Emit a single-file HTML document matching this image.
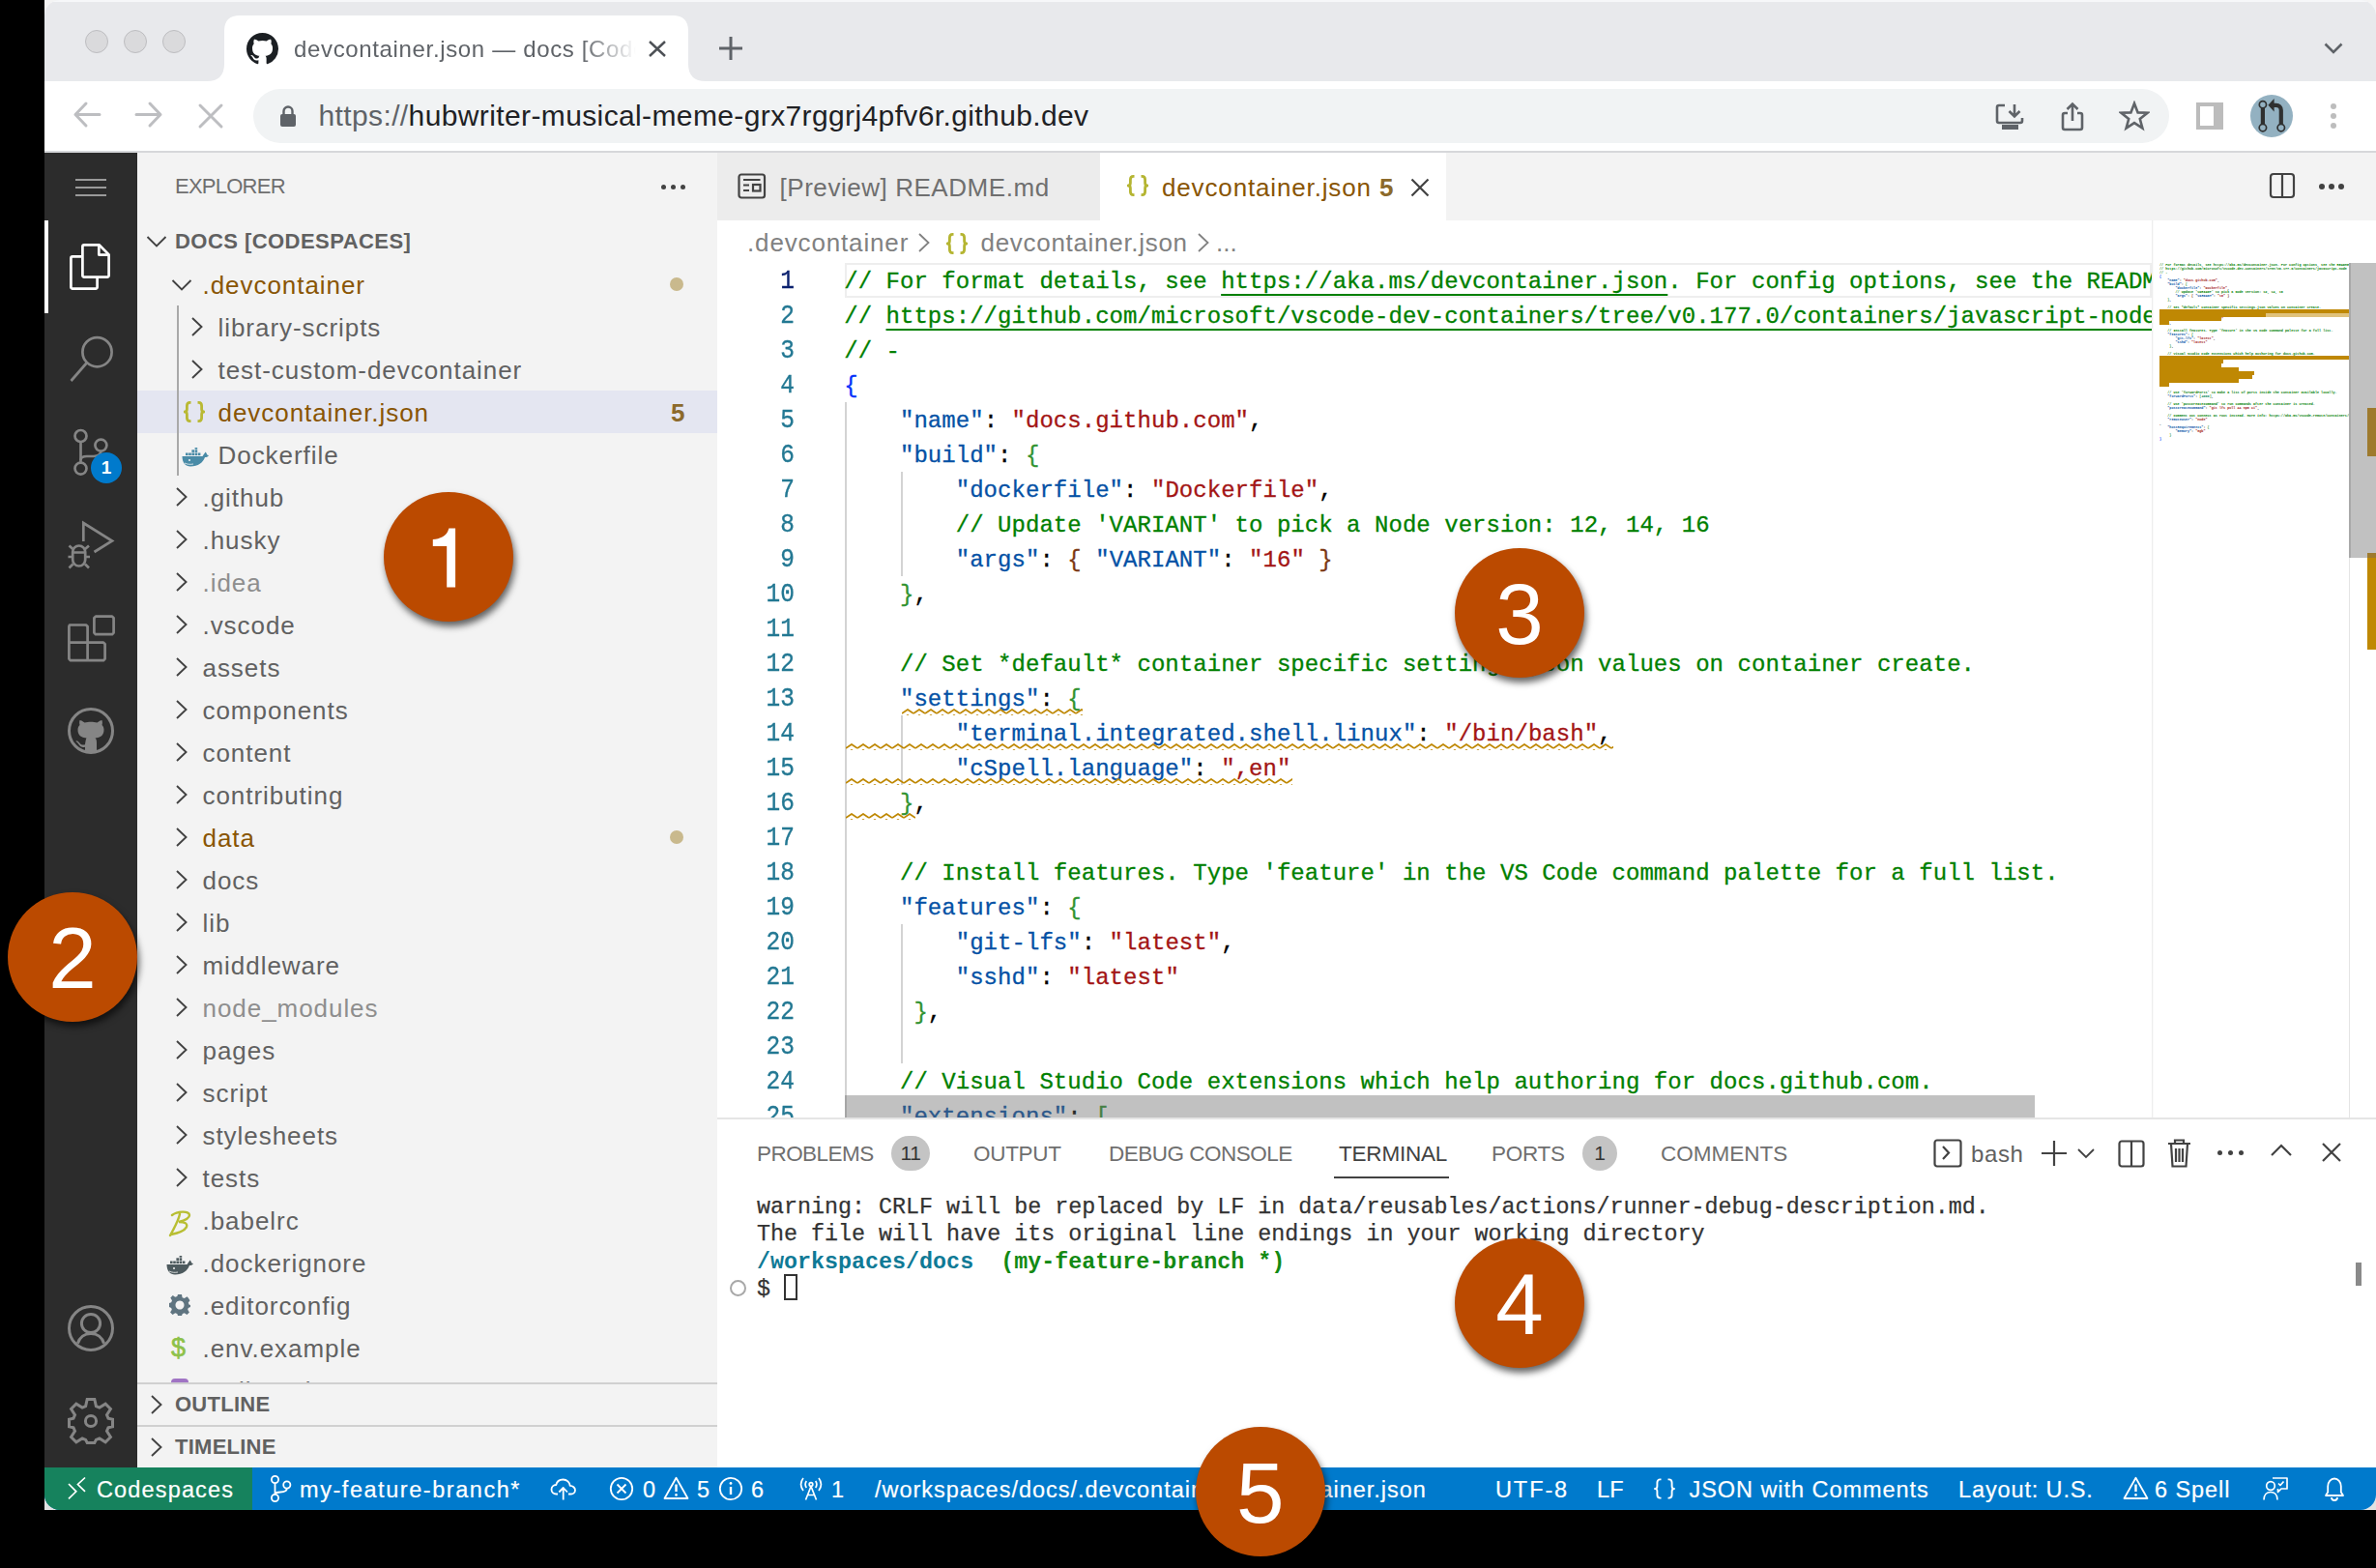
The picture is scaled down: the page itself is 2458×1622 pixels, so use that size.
<!DOCTYPE html>
<html><head><meta charset="utf-8">
<style>
*{box-sizing:border-box}
html,body{margin:0;padding:0}
body{width:2458px;height:1622px;background:#000;overflow:hidden;position:relative;font-family:"Liberation Sans",sans-serif}
.a{position:absolute}
#win{position:absolute;left:0;top:0;width:2458px;height:1562px;clip-path:inset(0 0 0 46px round 16px);background:#fff;overflow:hidden}
#frame{position:absolute;left:46px;top:0;width:2412px;height:1562px;background:linear-gradient(180deg,#f4f4f4 0,#f4f4f4 60px,#e2e2e2 1500px)}
.mono{font-family:"Liberation Mono",monospace}
.t{white-space:pre;position:absolute}
</style></head>
<body>
<div id="frame"></div>
<div id="win">

  <!-- chrome tab strip -->
  <div class="a" style="left:46px;top:0;width:2412px;height:84px;background:#e8e9ec"></div>
  <div class="a" style="left:46px;top:0;width:2412px;height:2px;background:#f6f7f9"></div>
  <!-- traffic lights -->
  <div class="a" style="left:88px;top:31px;width:24px;height:24px;border-radius:50%;background:#dadadc;border:1px solid #bdbdc0"></div>
  <div class="a" style="left:128px;top:31px;width:24px;height:24px;border-radius:50%;background:#dadadc;border:1px solid #bdbdc0"></div>
  <div class="a" style="left:168px;top:31px;width:24px;height:24px;border-radius:50%;background:#dadadc;border:1px solid #bdbdc0"></div>
  <!-- active tab -->
  <svg class="a" style="left:214px;top:16px" width="516" height="68" viewBox="0 0 516 68">
    <path d="M0 68 Q18 68 18 50 L18 16 Q18 0 34 0 L482 0 Q498 0 498 16 L498 50 Q498 68 516 68 Z" fill="#fff"/>
  </svg>
  <svg class="a" style="left:255px;top:34px" width="33" height="33" viewBox="0 0 16 16"><path fill="#1b1f23" d="M8 0C3.58 0 0 3.58 0 8c0 3.54 2.29 6.53 5.47 7.59.4.07.55-.17.55-.38 0-.19-.01-.82-.01-1.49-2.01.37-2.53-.49-2.69-.94-.09-.23-.48-.94-.82-1.13-.28-.15-.68-.52-.01-.53.63-.01 1.08.58 1.23.82.72 1.21 1.87.87 2.33.66.07-.52.28-.87.51-1.07-1.78-.2-3.64-.89-3.64-3.95 0-.87.31-1.59.82-2.15-.08-.2-.36-1.02.08-2.12 0 0 .67-.21 2.2.82.64-.18 1.32-.27 2-.27.68 0 1.36.09 2 .27 1.53-1.04 2.2-.82 2.2-.82.44 1.1.16 1.92.08 2.12.51.56.82 1.27.82 2.15 0 3.07-1.87 3.75-3.65 3.95.29.25.54.73.54 1.48 0 1.07-.01 1.93-.01 2.2 0 .21.15.46.55.38A8.013 8.013 0 0016 8c0-4.42-3.58-8-8-8z"/></svg>
  <div class="t" style="left:304px;top:35.5px;font-size:24px;line-height:30px;color:#5f6368;letter-spacing:0.65px;width:354px;overflow:hidden;-webkit-mask-image:linear-gradient(90deg,#000 84%,transparent 100%)">devcontainer.json — docs [Codespaces]</div>
  <svg class="a" style="left:670px;top:42px" width="20" height="17" viewBox="0 0 20 17"><path d="M2 1 L18 16 M18 1 L2 16" stroke="#4d5156" stroke-width="2.4" fill="none"/></svg>
  <svg class="a" style="left:742px;top:37px" width="28" height="26" viewBox="0 0 28 26"><path d="M14 1 V25 M2 13 H26" stroke="#5f6368" stroke-width="3" fill="none"/></svg>
  <svg class="a" style="left:2404px;top:44px" width="20" height="12" viewBox="0 0 20 12"><path d="M1.5 1.5 L10 10 L18.5 1.5" stroke="#5f6368" stroke-width="2.6" fill="none"/></svg>

  <!-- toolbar -->
  <div class="a" style="left:46px;top:84px;width:2412px;height:72px;background:#fff"></div>
  <div class="a" style="left:46px;top:156px;width:2412px;height:2px;background:#d6d7da"></div>
  <svg class="a" style="left:74px;top:104px" width="32" height="30" viewBox="0 0 32 30"><path d="M15 3 L4 14.5 L15 26 M4 14.5 H29" stroke="#bdbec1" stroke-width="3" fill="none" stroke-linecap="round" stroke-linejoin="round"/></svg>
  <svg class="a" style="left:138px;top:104px" width="32" height="30" viewBox="0 0 32 30"><path d="M17 3 L28 14.5 L17 26 M28 14.5 H3" stroke="#bdbec1" stroke-width="3" fill="none" stroke-linecap="round" stroke-linejoin="round"/></svg>
  <svg class="a" style="left:203px;top:105px" width="30" height="30" viewBox="0 0 30 30"><path d="M4 4 L26 26 M26 4 L4 26" stroke="#bdbec1" stroke-width="3" fill="none" stroke-linecap="round"/></svg>
  <div class="a" style="left:262px;top:92px;width:1982px;height:56px;border-radius:28px;background:#f1f3f4"></div>
  <svg class="a" style="left:289px;top:108px" width="18" height="24" viewBox="0 0 18 24"><path d="M4.5 10 V7 a4.5 4.5 0 0 1 9 0 V10" stroke="#5f6368" stroke-width="2.4" fill="none"/><rect x="1" y="10" width="16" height="13" rx="2" fill="#5f6368"/></svg>
  <div class="t" style="left:329.5px;top:101.5px;font-size:30px;line-height:36px;color:#202124;letter-spacing:0.38px"><span style="color:#5f6368">https://</span>hubwriter-musical-meme-grx7rggrj4pfv6r.github.dev</div>
  <!-- install -->
  <svg class="a" style="left:2064px;top:106px" width="32" height="30" viewBox="0 0 32 30"><path d="M10 3 H4 a2 2 0 0 0 -2 2 V19 a2 2 0 0 0 2 2 H26 a2 2 0 0 0 2 -2 V16" stroke="#5f6368" stroke-width="2.6" fill="none"/><path d="M20 2 V14 M14.5 9 L20 14.5 L25.5 9" stroke="#5f6368" stroke-width="2.6" fill="none"/><rect x="7" y="23" width="17" height="5" fill="#5f6368"/></svg>
  <!-- share -->
  <svg class="a" style="left:2131px;top:105px" width="26" height="32" viewBox="0 0 26 32"><path d="M8 12 H5 a2 2 0 0 0 -2 2 V27 a2 2 0 0 0 2 2 H21 a2 2 0 0 0 2 -2 V14 a2 2 0 0 0 -2 -2 H18" stroke="#5f6368" stroke-width="2.6" fill="none"/><path d="M13 20 V3 M7.5 8 L13 2.5 L18.5 8" stroke="#5f6368" stroke-width="2.6" fill="none"/></svg>
  <!-- star -->
  <svg class="a" style="left:2192px;top:104px" width="32" height="32" viewBox="0 0 32 32"><path d="M16 3 L19.6 12.4 L29.5 12.8 L21.8 19 L24.4 28.6 L16 23.1 L7.6 28.6 L10.2 19 L2.5 12.8 L12.4 12.4 Z" stroke="#5f6368" stroke-width="2.6" fill="none" stroke-linejoin="miter"/></svg>
  <!-- side panel -->
  <div class="a" style="left:2272px;top:106px;width:28px;height:28px;background:#bcbcbc"></div>
  <div class="a" style="left:2276px;top:110px;width:14px;height:20px;background:#fff"></div>
  <!-- avatar -->
  <div class="a" style="left:2328px;top:98px;width:44px;height:44px;border-radius:50%;background:#93b1c1"></div>
  <svg class="a" style="left:2320px;top:90px" width="60" height="60" viewBox="0 0 60 60"><g fill="none" stroke="#2f3030"><circle cx="20.9" cy="18.2" r="3.6" stroke-width="1.7"/><circle cx="20.9" cy="42.1" r="3.7" stroke-width="1.7"/><circle cx="39.8" cy="42.1" r="3.7" stroke-width="1.7"/><path d="M20.9 22 V38.3" stroke-width="4.2"/><path d="M39.8 38.3 V24 C39.8 21 37.6 18.8 34.6 18.8 H31" stroke-width="4.2"/></g><path d="M26.4 18.8 L32.6 11.9 V25.6 Z" fill="#2f3030"/></svg>
  <!-- kebab -->
  <div class="a" style="left:2411px;top:107px;width:6px;height:6px;border-radius:50%;background:#bdbdbd"></div>
  <div class="a" style="left:2411px;top:117px;width:6px;height:6px;border-radius:50%;background:#bdbdbd"></div>
  <div class="a" style="left:2411px;top:127px;width:6px;height:6px;border-radius:50%;background:#bdbdbd"></div>



  <!-- activity bar -->
  <div class="a" style="left:46px;top:158px;width:96px;height:1360px;background:#2c2c2c"></div>
  <div class="a" style="left:78px;top:185px;width:32px;height:2px;background:#9a9a9a"></div>
  <div class="a" style="left:78px;top:193px;width:32px;height:2px;background:#9a9a9a"></div>
  <div class="a" style="left:78px;top:201px;width:32px;height:2px;background:#9a9a9a"></div>
  <div class="a" style="left:46px;top:228px;width:4px;height:96px;background:#fff"></div>
  <svg class="a" style="left:70px;top:252px" width="48" height="48" viewBox="0 0 48 48" fill="none" stroke="#fff" stroke-width="2.7" stroke-linejoin="round">
    <path d="M14.3 13.3 H5 a1.6 1.6 0 0 0 -1.6 1.6 V45 a1.6 1.6 0 0 0 1.6 1.6 H29 a1.6 1.6 0 0 0 1.6 -1.6 V36"/>
    <path d="M17 1.3 H32.5 L42.6 11.4 V33 a1.6 1.6 0 0 1 -1.6 1.6 H17 a1.6 1.6 0 0 1 -1.6 -1.6 V3 a1.6 1.6 0 0 1 1.6 -1.6 Z"/>
    <path d="M32.3 1.5 V11.6 H42.4" />
  </svg>
  <svg class="a" style="left:70px;top:347px" width="48" height="50" viewBox="0 0 48 50" fill="none" stroke="#858585" stroke-width="2.7">
    <circle cx="30.5" cy="17.2" r="15.1"/>
    <path d="M19.6 28.5 L3.5 47"/>
  </svg>
  <svg class="a" style="left:70px;top:440px" width="48" height="56" viewBox="0 0 48 56" fill="none" stroke="#858585" stroke-width="2.7">
    <circle cx="13.5" cy="11" r="6"/>
    <circle cx="34.4" cy="20.6" r="6"/>
    <circle cx="13.5" cy="44.6" r="6"/>
    <path d="M13.5 17 V38.6"/>
    <path d="M34.4 26.6 C34.4 31 31 32 27 32 H20 C16 32 13.5 33 13.5 36"/>
  </svg>
  <div class="a" style="left:94px;top:468px;width:32px;height:32px;border-radius:50%;background:#007acc;color:#fff;font-weight:bold;font-size:19px;line-height:32px;text-align:center">1</div>
  <svg class="a" style="left:70px;top:538px" width="50" height="52" viewBox="0 0 50 52" fill="none" stroke="#858585" stroke-width="2.7">
    <path d="M16.3 22 V3 L46 21.5 L27.5 33"/>
    <path d="M11.7 26.5 a6.5 6.5 0 0 1 6.5 6.5 V41 a6.5 6.5 0 0 1 -13 0 V33 a6.5 6.5 0 0 1 6.5 -6.5 Z"/>
    <path d="M5.2 33.5 H18.2 M1.5 26.5 L5.5 30 M22 26.5 L18 30 M0.5 38 H5 M18.4 38 H23 M1.5 49.5 L5.5 45.5 M22 49.5 L18 45.5"/>
  </svg>
  <svg class="a" style="left:70px;top:635px" width="50" height="50" viewBox="0 0 50 50" fill="none" stroke="#858585" stroke-width="2.7" stroke-linejoin="round">
    <path d="M2 11.5 H19 L20.6 13 V29.6 H37 L38.6 31.2 V46.6 L37 48.2 H3 L1.4 46.6 V13 Z"/>
    <path d="M1.4 29.6 H20.6 V48.2"/>
    <path d="M29 2.6 H46 L47.6 4.2 V19.6 L46 21.2 H29 L27.4 19.6 V4.2 Z"/>
  </svg>
  <svg class="a" style="left:70px;top:732px" width="48" height="48" viewBox="0 0 48 48">
    <circle cx="24" cy="24" r="22.5" fill="none" stroke="#858585" stroke-width="3"/>
    <path fill="#858585" d="M12.5 13 C13 13 15.5 13.8 17.5 15.5 C19.5 14.9 22 14.7 24 14.7 C26 14.7 28.5 14.9 30.5 15.5 C32.5 13.8 35 13 35.5 13 C36 14.5 36 16.5 35.5 18 C36.8 19.3 37.5 21 37.5 23 C37.5 28.5 34 31 28.5 31.6 C29.6 32.6 30 34 30 36 V45.5 C28 46.2 26 46.5 24 46.5 C22 46.5 20 46.2 18 45.5 V40.8 C15 41.5 13 40.5 11.5 38 C10.5 36.4 9.5 35.6 8.5 35 L9 34.2 C10.5 34.5 11.8 35.6 13 37.2 C14.2 38.7 15.8 38.9 18 38.3 C18.2 36.9 18.8 32.4 19.5 31.6 C14 31 10.5 28.5 10.5 23 C10.5 21 11.2 19.3 12.5 18 C12 16.5 12 14.5 12.5 13 Z"/>
  </svg>
  <svg class="a" style="left:70px;top:1350px" width="48" height="48" viewBox="0 0 48 48" fill="none" stroke="#858585" stroke-width="3">
    <circle cx="24" cy="24" r="22.5"/>
    <circle cx="24" cy="19" r="9.6"/>
    <path d="M10.4 39.7 C12.3 33.5 17.6 29.4 24 29.4 C30.4 29.4 35.7 33.5 37.6 39.7"/>
  </svg>
  <svg class="a" style="left:70px;top:1446px" width="48" height="48" viewBox="0 0 48 48" fill="none" stroke="#858585" stroke-width="3" stroke-linejoin="miter">
    <path d="M20.2 1.5 H27.8 L29.4 8.6 L32.9 10.1 L39.1 6.2 L44.4 11.5 L40.5 17.7 L42 21.2 L46.5 22.2 V29.8 L42 30.8 L40.5 34.3 L44.4 40.5 L39.1 45.8 L32.9 41.9 L29.4 43.4 L27.8 46.5 H20.2 L18.6 43.4 L15.1 41.9 L8.9 45.8 L3.6 40.5 L7.5 34.3 L6 30.8 L1.5 29.8 V22.2 L6 21.2 L7.5 17.7 L3.6 11.5 L8.9 6.2 L15.1 10.1 L18.6 8.6 Z"/>
    <circle cx="24" cy="24" r="5.6"/>
  </svg>

  <!-- sidebar -->
  <div class="a" style="left:142px;top:158px;width:600px;height:1360px;background:#f3f3f3;overflow:hidden">
<div class="a" style="left:-142px;top:-158px;width:2458px;height:1622px">
<div class="t" style="left:181px;top:178px;font-size:22px;line-height:30px;color:#6f6f6f;letter-spacing:-0.75px">EXPLORER</div>
<div class="a" style="left:684px;top:191px;width:5px;height:5px;border-radius:50%;background:#424242"></div><div class="a" style="left:694px;top:191px;width:5px;height:5px;border-radius:50%;background:#424242"></div><div class="a" style="left:704px;top:191px;width:5px;height:5px;border-radius:50%;background:#424242"></div>
<svg class="a" style="left:151px;top:243px" width="22" height="14" viewBox="0 0 22 14"><path d="M1.5 2 L11 11.5 L20.5 2" stroke="#424242" stroke-width="1.9" fill="none"/></svg>
<div class="t" style="left:181px;top:235px;font-size:22px;line-height:30px;color:#616161;font-weight:bold;letter-spacing:0.45px">DOCS [CODESPACES]</div>
<svg class="a" style="left:177px;top:288px" width="22" height="14" viewBox="0 0 22 14"><path d="M1.5 2 L11 11.5 L20.5 2" stroke="#424242" stroke-width="1.9" fill="none"/></svg>
<div class="t" style="left:209.5px;top:273px;font-size:26px;line-height:44px;color:#895503;letter-spacing:0.95px">.devcontainer</div>
<div class="a" style="left:693px;top:287px;width:14px;height:14px;border-radius:50%;background:#c9b98d"></div>
<svg class="a" style="left:197px;top:327px" width="14" height="22" viewBox="0 0 14 22"><path d="M2 2 L11.5 11 L2 20" stroke="#424242" stroke-width="1.9" fill="none"/></svg>
<div class="t" style="left:225.5px;top:317px;font-size:26px;line-height:44px;color:#616161;letter-spacing:0.95px">library-scripts</div>
<svg class="a" style="left:197px;top:371px" width="14" height="22" viewBox="0 0 14 22"><path d="M2 2 L11.5 11 L2 20" stroke="#424242" stroke-width="1.9" fill="none"/></svg>
<div class="t" style="left:225.5px;top:361px;font-size:26px;line-height:44px;color:#616161;letter-spacing:0.95px">test-custom-devcontainer</div>
<div class="a" style="left:142px;top:404px;width:600px;height:44px;background:#e4e6f1"></div>
<svg class="a" style="left:190px;top:415px" width="22" height="22" viewBox="0 0 22 22" fill="none" stroke="#b9b934" stroke-width="2.8" stroke-linejoin="round"><path d="M7.5 1.4 H6.5 C4.4 1.4 3.4 2.6 3.4 4.8 V8.2 C3.4 9.9 2.6 11 1 11 C2.6 11 3.4 12.1 3.4 13.8 V17.2 C3.4 19.4 4.4 20.6 6.5 20.6 H7.5"/><path d="M14.5 1.4 H15.5 C17.6 1.4 18.6 2.6 18.6 4.8 V8.2 C18.6 9.9 19.4 11 21 11 C19.4 11 18.6 12.1 18.6 13.8 V17.2 C18.6 19.4 17.6 20.6 15.5 20.6 H14.5"/></svg>
<div class="t" style="left:225.5px;top:405px;font-size:26px;line-height:44px;color:#895503;letter-spacing:0.95px">devcontainer.json</div>
<div class="t" style="left:694px;top:405px;font-size:26px;line-height:44px;color:#8c6a2b;font-weight:bold">5</div>
<svg class="a" style="left:188px;top:463px" width="28" height="20" viewBox="0 0 28 20"><g fill="#498ba7"><rect x="4" y="5.5" width="2.6" height="2.6"/><rect x="7.2" y="5.5" width="2.6" height="2.6"/><rect x="10.4" y="5.5" width="2.6" height="2.6"/><rect x="13.6" y="5.5" width="2.6" height="2.6"/><rect x="16.8" y="5.5" width="2.6" height="2.6"/><rect x="10.4" y="2.3" width="2.6" height="2.6"/><rect x="13.6" y="2.3" width="2.6" height="2.6"/><rect x="13.6" y="-0.9" width="2.6" height="2.6"/><path d="M0.5 9 H21.5 C22.5 7 24 6 24.5 4.5 C25.5 5.5 26 6.5 26 7.2 L28 8.2 C27 9.5 25.5 10 24 10 C22 15.5 17 19.5 9 19.5 C4 19.5 0.5 15.5 0.5 9 Z"/></g><circle cx="8" cy="13" r="1" fill="#f3f3f3"/><path d="M3 16 C6 17.5 9 17.6 12 17" stroke="#f3f3f3" stroke-width="0.8" fill="none"/></svg>
<div class="t" style="left:225.5px;top:449px;font-size:26px;line-height:44px;color:#616161;letter-spacing:0.95px">Dockerfile</div>
<svg class="a" style="left:181px;top:503px" width="14" height="22" viewBox="0 0 14 22"><path d="M2 2 L11.5 11 L2 20" stroke="#424242" stroke-width="1.9" fill="none"/></svg>
<div class="t" style="left:209.5px;top:493px;font-size:26px;line-height:44px;color:#616161;letter-spacing:0.95px">.github</div>
<svg class="a" style="left:181px;top:547px" width="14" height="22" viewBox="0 0 14 22"><path d="M2 2 L11.5 11 L2 20" stroke="#424242" stroke-width="1.9" fill="none"/></svg>
<div class="t" style="left:209.5px;top:537px;font-size:26px;line-height:44px;color:#616161;letter-spacing:0.95px">.husky</div>
<svg class="a" style="left:181px;top:591px" width="14" height="22" viewBox="0 0 14 22"><path d="M2 2 L11.5 11 L2 20" stroke="#424242" stroke-width="1.9" fill="none"/></svg>
<div class="t" style="left:209.5px;top:581px;font-size:26px;line-height:44px;color:#8e8e8e;letter-spacing:0.95px">.idea</div>
<svg class="a" style="left:181px;top:635px" width="14" height="22" viewBox="0 0 14 22"><path d="M2 2 L11.5 11 L2 20" stroke="#424242" stroke-width="1.9" fill="none"/></svg>
<div class="t" style="left:209.5px;top:625px;font-size:26px;line-height:44px;color:#616161;letter-spacing:0.95px">.vscode</div>
<svg class="a" style="left:181px;top:679px" width="14" height="22" viewBox="0 0 14 22"><path d="M2 2 L11.5 11 L2 20" stroke="#424242" stroke-width="1.9" fill="none"/></svg>
<div class="t" style="left:209.5px;top:669px;font-size:26px;line-height:44px;color:#616161;letter-spacing:0.95px">assets</div>
<svg class="a" style="left:181px;top:723px" width="14" height="22" viewBox="0 0 14 22"><path d="M2 2 L11.5 11 L2 20" stroke="#424242" stroke-width="1.9" fill="none"/></svg>
<div class="t" style="left:209.5px;top:713px;font-size:26px;line-height:44px;color:#616161;letter-spacing:0.95px">components</div>
<svg class="a" style="left:181px;top:767px" width="14" height="22" viewBox="0 0 14 22"><path d="M2 2 L11.5 11 L2 20" stroke="#424242" stroke-width="1.9" fill="none"/></svg>
<div class="t" style="left:209.5px;top:757px;font-size:26px;line-height:44px;color:#616161;letter-spacing:0.95px">content</div>
<svg class="a" style="left:181px;top:811px" width="14" height="22" viewBox="0 0 14 22"><path d="M2 2 L11.5 11 L2 20" stroke="#424242" stroke-width="1.9" fill="none"/></svg>
<div class="t" style="left:209.5px;top:801px;font-size:26px;line-height:44px;color:#616161;letter-spacing:0.95px">contributing</div>
<svg class="a" style="left:181px;top:855px" width="14" height="22" viewBox="0 0 14 22"><path d="M2 2 L11.5 11 L2 20" stroke="#424242" stroke-width="1.9" fill="none"/></svg>
<div class="t" style="left:209.5px;top:845px;font-size:26px;line-height:44px;color:#895503;letter-spacing:0.95px">data</div>
<div class="a" style="left:693px;top:859px;width:14px;height:14px;border-radius:50%;background:#c9b98d"></div>
<svg class="a" style="left:181px;top:899px" width="14" height="22" viewBox="0 0 14 22"><path d="M2 2 L11.5 11 L2 20" stroke="#424242" stroke-width="1.9" fill="none"/></svg>
<div class="t" style="left:209.5px;top:889px;font-size:26px;line-height:44px;color:#616161;letter-spacing:0.95px">docs</div>
<svg class="a" style="left:181px;top:943px" width="14" height="22" viewBox="0 0 14 22"><path d="M2 2 L11.5 11 L2 20" stroke="#424242" stroke-width="1.9" fill="none"/></svg>
<div class="t" style="left:209.5px;top:933px;font-size:26px;line-height:44px;color:#616161;letter-spacing:0.95px">lib</div>
<svg class="a" style="left:181px;top:987px" width="14" height="22" viewBox="0 0 14 22"><path d="M2 2 L11.5 11 L2 20" stroke="#424242" stroke-width="1.9" fill="none"/></svg>
<div class="t" style="left:209.5px;top:977px;font-size:26px;line-height:44px;color:#616161;letter-spacing:0.95px">middleware</div>
<svg class="a" style="left:181px;top:1031px" width="14" height="22" viewBox="0 0 14 22"><path d="M2 2 L11.5 11 L2 20" stroke="#424242" stroke-width="1.9" fill="none"/></svg>
<div class="t" style="left:209.5px;top:1021px;font-size:26px;line-height:44px;color:#8e8e8e;letter-spacing:0.95px">node_modules</div>
<svg class="a" style="left:181px;top:1075px" width="14" height="22" viewBox="0 0 14 22"><path d="M2 2 L11.5 11 L2 20" stroke="#424242" stroke-width="1.9" fill="none"/></svg>
<div class="t" style="left:209.5px;top:1065px;font-size:26px;line-height:44px;color:#616161;letter-spacing:0.95px">pages</div>
<svg class="a" style="left:181px;top:1119px" width="14" height="22" viewBox="0 0 14 22"><path d="M2 2 L11.5 11 L2 20" stroke="#424242" stroke-width="1.9" fill="none"/></svg>
<div class="t" style="left:209.5px;top:1109px;font-size:26px;line-height:44px;color:#616161;letter-spacing:0.95px">script</div>
<svg class="a" style="left:181px;top:1163px" width="14" height="22" viewBox="0 0 14 22"><path d="M2 2 L11.5 11 L2 20" stroke="#424242" stroke-width="1.9" fill="none"/></svg>
<div class="t" style="left:209.5px;top:1153px;font-size:26px;line-height:44px;color:#616161;letter-spacing:0.95px">stylesheets</div>
<svg class="a" style="left:181px;top:1207px" width="14" height="22" viewBox="0 0 14 22"><path d="M2 2 L11.5 11 L2 20" stroke="#424242" stroke-width="1.9" fill="none"/></svg>
<div class="t" style="left:209.5px;top:1197px;font-size:26px;line-height:44px;color:#616161;letter-spacing:0.95px">tests</div>
<svg class="a" style="left:174px;top:1252px" width="24" height="28" viewBox="0 0 24 28"><path d="M4 5 C9 1 22 0 22 5 C22 9 15 11 11 12 C18 12 20 14 19 17 C17 22 8 24 3 25 M12 4 C10 12 6 19 2 26" stroke="#b8be32" stroke-width="2.4" fill="none" stroke-linecap="round"/></svg>
<div class="t" style="left:209.5px;top:1241px;font-size:26px;line-height:44px;color:#616161;letter-spacing:0.95px">.babelrc</div>
<svg class="a" style="left:172px;top:1299px" width="28" height="20" viewBox="0 0 28 20"><g fill="#4d5a5e"><rect x="4" y="5.5" width="2.6" height="2.6"/><rect x="7.2" y="5.5" width="2.6" height="2.6"/><rect x="10.4" y="5.5" width="2.6" height="2.6"/><rect x="13.6" y="5.5" width="2.6" height="2.6"/><rect x="16.8" y="5.5" width="2.6" height="2.6"/><rect x="10.4" y="2.3" width="2.6" height="2.6"/><rect x="13.6" y="2.3" width="2.6" height="2.6"/><rect x="13.6" y="-0.9" width="2.6" height="2.6"/><path d="M0.5 9 H21.5 C22.5 7 24 6 24.5 4.5 C25.5 5.5 26 6.5 26 7.2 L28 8.2 C27 9.5 25.5 10 24 10 C22 15.5 17 19.5 9 19.5 C4 19.5 0.5 15.5 0.5 9 Z"/></g><circle cx="8" cy="13" r="1" fill="#f3f3f3"/><path d="M3 16 C6 17.5 9 17.6 12 17" stroke="#f3f3f3" stroke-width="0.8" fill="none"/></svg>
<div class="t" style="left:209.5px;top:1285px;font-size:26px;line-height:44px;color:#616161;letter-spacing:0.95px">.dockerignore</div>
<svg class="a" style="left:174px;top:1338px" width="24" height="24" viewBox="0 0 24 24"><path fill="#5f7480" fill-rule="evenodd" d="M10 1 H14 L14.6 4.2 L16.8 5.1 L19.5 3.3 L20.7 4.5 L22.5 7.2 L20.8 9.6 L21.5 11.6 L23 12 V14 L20.8 15 L20.2 16.8 L21.9 19.4 L19.4 21.9 L16.8 20.2 L14.8 21 L14 23 H10 L9.3 21 L7.2 20.2 L4.6 21.9 L2.1 19.4 L3.8 16.8 L3.2 15 L1 14 V10 L3.2 9.3 L4 7.2 L2.3 4.6 L4.8 2.1 L7.2 3.8 L9.3 3.1 Z M12 7.5 A4.5 4.5 0 1 0 12.01 7.5 Z"/></svg>
<div class="t" style="left:209.5px;top:1329px;font-size:26px;line-height:44px;color:#616161;letter-spacing:0.95px">.editorconfig</div>
<div class="t" style="left:177px;top:1372px;font-size:27px;line-height:44px;color:#8dc149;-webkit-text-stroke:0.6px #8dc149">$</div>
<div class="t" style="left:209.5px;top:1373px;font-size:26px;line-height:44px;color:#616161;letter-spacing:0.95px">.env.example</div>
<div class="a" style="left:177px;top:1426px;width:18px;height:20px;background:#a074c4;border-radius:4px"></div>
<div class="t" style="left:209.5px;top:1417px;font-size:26px;line-height:44px;color:#616161;letter-spacing:0.95px">.eslintrc.js</div>
<div class="a" style="left:183px;top:316px;width:2px;height:176px;background:#a9a9a9"></div>
<div class="a" style="left:142px;top:1430px;width:600px;height:88px;background:#f3f3f3"></div>
<div class="a" style="left:142px;top:1430px;width:600px;height:2px;background:#d0d0d0"></div>
<div class="a" style="left:142px;top:1474px;width:600px;height:2px;background:#d0d0d0"></div>
<svg class="a" style="left:155px;top:1442px" width="14" height="22" viewBox="0 0 14 22"><path d="M2 2 L11.5 11 L2 20" stroke="#424242" stroke-width="1.9" fill="none"/></svg>
<svg class="a" style="left:155px;top:1486px" width="14" height="22" viewBox="0 0 14 22"><path d="M2 2 L11.5 11 L2 20" stroke="#424242" stroke-width="1.9" fill="none"/></svg>
<div class="t" style="left:181px;top:1438px;font-size:22px;line-height:30px;color:#616161;font-weight:bold;letter-spacing:0.25px">OUTLINE</div>
<div class="t" style="left:181px;top:1482px;font-size:22px;line-height:30px;color:#616161;font-weight:bold;letter-spacing:0.25px">TIMELINE</div>
</div></div>

  <!-- editor tabs -->
  <div class="a" style="left:742px;top:158px;width:1716px;height:70px;background:#f3f3f3"></div>
  <div class="a" style="left:742px;top:158px;width:396px;height:70px;background:#ececec"></div>
  <svg class="a" style="left:763px;top:179px" width="30" height="27" viewBox="0 0 30 27" fill="none" stroke="#424242" stroke-width="2.2">
    <rect x="1.5" y="1.5" width="26.5" height="24" rx="2.5"/>
    <path d="M6 7 H23.5 M6 12.5 H12 M6 18 H12"/>
    <rect x="16" y="12" width="7.5" height="6.5"/>
  </svg>
  <div class="t" style="left:806.5px;top:172px;font-size:26px;line-height:44px;color:#6f6f6f;letter-spacing:0.55px">[Preview] README.md</div>
  <div class="a" style="left:1138px;top:158px;width:358px;height:70px;background:#fff"></div>
  <svg class="a" style="left:1166px;top:181px" width="22" height="22" viewBox="0 0 22 22" fill="none" stroke="#b5b532" stroke-width="2.8" stroke-linejoin="round"><path d="M7.5 1.4 H6.5 C4.4 1.4 3.4 2.6 3.4 4.8 V8.2 C3.4 9.9 2.6 11 1 11 C2.6 11 3.4 12.1 3.4 13.8 V17.2 C3.4 19.4 4.4 20.6 6.5 20.6 H7.5"/><path d="M14.5 1.4 H15.5 C17.6 1.4 18.6 2.6 18.6 4.8 V8.2 C18.6 9.9 19.4 11 21 11 C19.4 11 18.6 12.1 18.6 13.8 V17.2 C18.6 19.4 17.6 20.6 15.5 20.6 H14.5"/></svg>
  <div class="t" style="left:1202px;top:172px;font-size:26px;line-height:44px;color:#895503;letter-spacing:0.85px">devcontainer.json <span style="letter-spacing:0;font-weight:bold;color:#8c6a2b">5</span></div>
  <svg class="a" style="left:1458px;top:183px" width="22" height="22" viewBox="0 0 22 22"><path d="M2.5 2.5 L19.5 19.5 M19.5 2.5 L2.5 19.5" stroke="#424242" stroke-width="2.2"/></svg>
  <svg class="a" style="left:2347px;top:178px" width="28" height="28" viewBox="0 0 28 28" fill="none" stroke="#424242" stroke-width="2.2"><rect x="2" y="2" width="24" height="24" rx="3"/><path d="M14 2 V26"/></svg>
  <div class="a" style="left:2399px;top:190px;width:6px;height:6px;border-radius:50%;background:#424242"></div>
  <div class="a" style="left:2409px;top:190px;width:6px;height:6px;border-radius:50%;background:#424242"></div>
  <div class="a" style="left:2419px;top:190px;width:6px;height:6px;border-radius:50%;background:#424242"></div>

  <!-- editor -->
  <div class="a" style="left:742px;top:228px;width:1716px;height:928px;background:#fff"></div>
  <!-- breadcrumbs -->
  <div class="t" style="left:773px;top:229px;font-size:26px;line-height:44px;color:#818181;letter-spacing:0.85px">.devcontainer</div>
  <svg class="a" style="left:948px;top:240px" width="16" height="22" viewBox="0 0 16 22"><path d="M3 2 L12.5 11 L3 20" stroke="#818181" stroke-width="1.8" fill="none"/></svg>
  <svg class="a" style="left:979px;top:241px" width="22" height="22" viewBox="0 0 22 22" fill="none" stroke="#b5b532" stroke-width="2.8" stroke-linejoin="round"><path d="M7.5 1.4 H6.5 C4.4 1.4 3.4 2.6 3.4 4.8 V8.2 C3.4 9.9 2.6 11 1 11 C2.6 11 3.4 12.1 3.4 13.8 V17.2 C3.4 19.4 4.4 20.6 6.5 20.6 H7.5"/><path d="M14.5 1.4 H15.5 C17.6 1.4 18.6 2.6 18.6 4.8 V8.2 C18.6 9.9 19.4 11 21 11 C19.4 11 18.6 12.1 18.6 13.8 V17.2 C18.6 19.4 17.6 20.6 15.5 20.6 H14.5"/></svg>
  <div class="t" style="left:1014.5px;top:229px;font-size:26px;line-height:44px;color:#818181;letter-spacing:0.7px">devcontainer.json</div>
  <svg class="a" style="left:1237px;top:240px" width="16" height="22" viewBox="0 0 16 22"><path d="M3 2 L12.5 11 L3 20" stroke="#818181" stroke-width="1.8" fill="none"/></svg>
  <div class="t" style="left:1258px;top:229px;font-size:26px;line-height:44px;color:#818181">...</div>
  <!-- current line -->
  <div class="a" style="left:874px;top:272px;width:1352px;height:36px;border:2px solid #eeeeee"></div>
  <div class="a" style="left:874.0px;top:416px;width:2px;height:740px;background:#d3d3d3"></div>
  <div class="a" style="left:931.8px;top:488px;width:2px;height:108px;background:#d3d3d3"></div>
  <div class="a" style="left:931.8px;top:740px;width:2px;height:72px;background:#d3d3d3"></div>
  <div class="a" style="left:931.8px;top:956px;width:2px;height:144px;background:#d3d3d3"></div>
<div class="a mono" style="left:0;top:0;width:2226px;height:1156px;overflow:hidden">
<div class="t" style="left:742px;top:274px;width:80px;text-align:right;font-size:24.5px;line-height:36px;color:#0b216f;-webkit-text-stroke:0.3px #0b216f;transform:scaleY(1.15);transform-origin:0 26px">1</div>
<div class="t" style="left:873.2px;top:274px;font-size:24px;line-height:36px;letter-spacing:0.04px;-webkit-text-stroke:0.3px currentColor"><span style="color:#008000;-webkit-text-stroke:0.3px #008000">// For format details, see </span><span style="color:#008000;-webkit-text-stroke:0.3px #008000;text-decoration:underline;text-decoration-thickness:2px;text-underline-offset:6px;text-decoration-skip-ink:none">https://aka.ms/devcontainer.json</span><span style="color:#008000;-webkit-text-stroke:0.3px #008000">. For config options, see the README at:</span></div>
<div class="t" style="left:742px;top:310px;width:80px;text-align:right;font-size:24.5px;line-height:36px;color:#237893;-webkit-text-stroke:0.3px #237893;transform:scaleY(1.15);transform-origin:0 26px">2</div>
<div class="t" style="left:873.2px;top:310px;font-size:24px;line-height:36px;letter-spacing:0.04px;-webkit-text-stroke:0.3px currentColor"><span style="color:#008000;-webkit-text-stroke:0.3px #008000">// </span><span style="color:#008000;-webkit-text-stroke:0.3px #008000;text-decoration:underline;text-decoration-thickness:2px;text-underline-offset:6px;text-decoration-skip-ink:none">https://github.com/microsoft/vscode-dev-containers/tree/v0.177.0/containers/javascript-node</span></div>
<div class="t" style="left:742px;top:346px;width:80px;text-align:right;font-size:24.5px;line-height:36px;color:#237893;-webkit-text-stroke:0.3px #237893;transform:scaleY(1.15);transform-origin:0 26px">3</div>
<div class="t" style="left:873.2px;top:346px;font-size:24px;line-height:36px;letter-spacing:0.04px;-webkit-text-stroke:0.3px currentColor"><span style="color:#008000;-webkit-text-stroke:0.3px #008000">// -</span></div>
<div class="t" style="left:742px;top:382px;width:80px;text-align:right;font-size:24.5px;line-height:36px;color:#237893;-webkit-text-stroke:0.3px #237893;transform:scaleY(1.15);transform-origin:0 26px">4</div>
<div class="t" style="left:873.2px;top:382px;font-size:24px;line-height:36px;letter-spacing:0.04px;-webkit-text-stroke:0.3px currentColor"><span style="color:#0431fa;-webkit-text-stroke:0.3px #0431fa">{</span></div>
<div class="t" style="left:742px;top:418px;width:80px;text-align:right;font-size:24.5px;line-height:36px;color:#237893;-webkit-text-stroke:0.3px #237893;transform:scaleY(1.15);transform-origin:0 26px">5</div>
<div class="t" style="left:873.2px;top:418px;font-size:24px;line-height:36px;letter-spacing:0.04px;-webkit-text-stroke:0.3px currentColor"><span style="color:#000000;-webkit-text-stroke:0.3px #000000">    </span><span style="color:#0451a5;-webkit-text-stroke:0.3px #0451a5">&quot;name&quot;</span><span style="color:#000000;-webkit-text-stroke:0.3px #000000">: </span><span style="color:#a31515;-webkit-text-stroke:0.3px #a31515">&quot;docs.github.com&quot;</span><span style="color:#000000;-webkit-text-stroke:0.3px #000000">,</span></div>
<div class="t" style="left:742px;top:454px;width:80px;text-align:right;font-size:24.5px;line-height:36px;color:#237893;-webkit-text-stroke:0.3px #237893;transform:scaleY(1.15);transform-origin:0 26px">6</div>
<div class="t" style="left:873.2px;top:454px;font-size:24px;line-height:36px;letter-spacing:0.04px;-webkit-text-stroke:0.3px currentColor"><span style="color:#000000;-webkit-text-stroke:0.3px #000000">    </span><span style="color:#0451a5;-webkit-text-stroke:0.3px #0451a5">&quot;build&quot;</span><span style="color:#000000;-webkit-text-stroke:0.3px #000000">: </span><span style="color:#319331;-webkit-text-stroke:0.3px #319331">{</span></div>
<div class="t" style="left:742px;top:490px;width:80px;text-align:right;font-size:24.5px;line-height:36px;color:#237893;-webkit-text-stroke:0.3px #237893;transform:scaleY(1.15);transform-origin:0 26px">7</div>
<div class="t" style="left:873.2px;top:490px;font-size:24px;line-height:36px;letter-spacing:0.04px;-webkit-text-stroke:0.3px currentColor"><span style="color:#000000;-webkit-text-stroke:0.3px #000000">        </span><span style="color:#0451a5;-webkit-text-stroke:0.3px #0451a5">&quot;dockerfile&quot;</span><span style="color:#000000;-webkit-text-stroke:0.3px #000000">: </span><span style="color:#a31515;-webkit-text-stroke:0.3px #a31515">&quot;Dockerfile&quot;</span><span style="color:#000000;-webkit-text-stroke:0.3px #000000">,</span></div>
<div class="t" style="left:742px;top:526px;width:80px;text-align:right;font-size:24.5px;line-height:36px;color:#237893;-webkit-text-stroke:0.3px #237893;transform:scaleY(1.15);transform-origin:0 26px">8</div>
<div class="t" style="left:873.2px;top:526px;font-size:24px;line-height:36px;letter-spacing:0.04px;-webkit-text-stroke:0.3px currentColor"><span style="color:#008000;-webkit-text-stroke:0.3px #008000">        // Update &#x27;VARIANT&#x27; to pick a Node version: 12, 14, 16</span></div>
<div class="t" style="left:742px;top:562px;width:80px;text-align:right;font-size:24.5px;line-height:36px;color:#237893;-webkit-text-stroke:0.3px #237893;transform:scaleY(1.15);transform-origin:0 26px">9</div>
<div class="t" style="left:873.2px;top:562px;font-size:24px;line-height:36px;letter-spacing:0.04px;-webkit-text-stroke:0.3px currentColor"><span style="color:#000000;-webkit-text-stroke:0.3px #000000">        </span><span style="color:#0451a5;-webkit-text-stroke:0.3px #0451a5">&quot;args&quot;</span><span style="color:#000000;-webkit-text-stroke:0.3px #000000">: </span><span style="color:#7b3814;-webkit-text-stroke:0.3px #7b3814">{</span><span style="color:#000000;-webkit-text-stroke:0.3px #000000"> </span><span style="color:#0451a5;-webkit-text-stroke:0.3px #0451a5">&quot;VARIANT&quot;</span><span style="color:#000000;-webkit-text-stroke:0.3px #000000">: </span><span style="color:#a31515;-webkit-text-stroke:0.3px #a31515">&quot;16&quot;</span><span style="color:#000000;-webkit-text-stroke:0.3px #000000"> </span><span style="color:#7b3814;-webkit-text-stroke:0.3px #7b3814">}</span></div>
<div class="t" style="left:742px;top:598px;width:80px;text-align:right;font-size:24.5px;line-height:36px;color:#237893;-webkit-text-stroke:0.3px #237893;transform:scaleY(1.15);transform-origin:0 26px">10</div>
<div class="t" style="left:873.2px;top:598px;font-size:24px;line-height:36px;letter-spacing:0.04px;-webkit-text-stroke:0.3px currentColor"><span style="color:#000000;-webkit-text-stroke:0.3px #000000">    </span><span style="color:#319331;-webkit-text-stroke:0.3px #319331">}</span><span style="color:#000000;-webkit-text-stroke:0.3px #000000">,</span></div>
<div class="t" style="left:742px;top:634px;width:80px;text-align:right;font-size:24.5px;line-height:36px;color:#237893;-webkit-text-stroke:0.3px #237893;transform:scaleY(1.15);transform-origin:0 26px">11</div>
<div class="t" style="left:873.2px;top:634px;font-size:24px;line-height:36px;letter-spacing:0.04px;-webkit-text-stroke:0.3px currentColor"></div>
<div class="t" style="left:742px;top:670px;width:80px;text-align:right;font-size:24.5px;line-height:36px;color:#237893;-webkit-text-stroke:0.3px #237893;transform:scaleY(1.15);transform-origin:0 26px">12</div>
<div class="t" style="left:873.2px;top:670px;font-size:24px;line-height:36px;letter-spacing:0.04px;-webkit-text-stroke:0.3px currentColor"><span style="color:#008000;-webkit-text-stroke:0.3px #008000">    // Set *default* container specific settings.json values on container create.</span></div>
<div class="t" style="left:742px;top:706px;width:80px;text-align:right;font-size:24.5px;line-height:36px;color:#237893;-webkit-text-stroke:0.3px #237893;transform:scaleY(1.15);transform-origin:0 26px">13</div>
<div class="t" style="left:873.2px;top:706px;font-size:24px;line-height:36px;letter-spacing:0.04px;-webkit-text-stroke:0.3px currentColor"><span style="color:#000000;-webkit-text-stroke:0.3px #000000">    </span><span style="color:#0451a5;-webkit-text-stroke:0.3px #0451a5">&quot;settings&quot;</span><span style="color:#000000;-webkit-text-stroke:0.3px #000000">: </span><span style="color:#319331;-webkit-text-stroke:0.3px #319331">{</span></div>
<div class="t" style="left:742px;top:742px;width:80px;text-align:right;font-size:24.5px;line-height:36px;color:#237893;-webkit-text-stroke:0.3px #237893;transform:scaleY(1.15);transform-origin:0 26px">14</div>
<div class="t" style="left:873.2px;top:742px;font-size:24px;line-height:36px;letter-spacing:0.04px;-webkit-text-stroke:0.3px currentColor"><span style="color:#000000;-webkit-text-stroke:0.3px #000000">        </span><span style="color:#0451a5;-webkit-text-stroke:0.3px #0451a5">&quot;terminal.integrated.shell.linux&quot;</span><span style="color:#000000;-webkit-text-stroke:0.3px #000000">: </span><span style="color:#a31515;-webkit-text-stroke:0.3px #a31515">&quot;/bin/bash&quot;</span><span style="color:#000000;-webkit-text-stroke:0.3px #000000">,</span></div>
<div class="t" style="left:742px;top:778px;width:80px;text-align:right;font-size:24.5px;line-height:36px;color:#237893;-webkit-text-stroke:0.3px #237893;transform:scaleY(1.15);transform-origin:0 26px">15</div>
<div class="t" style="left:873.2px;top:778px;font-size:24px;line-height:36px;letter-spacing:0.04px;-webkit-text-stroke:0.3px currentColor"><span style="color:#000000;-webkit-text-stroke:0.3px #000000">        </span><span style="color:#0451a5;-webkit-text-stroke:0.3px #0451a5">&quot;cSpell.language&quot;</span><span style="color:#000000;-webkit-text-stroke:0.3px #000000">: </span><span style="color:#a31515;-webkit-text-stroke:0.3px #a31515">&quot;,en&quot;</span></div>
<div class="t" style="left:742px;top:814px;width:80px;text-align:right;font-size:24.5px;line-height:36px;color:#237893;-webkit-text-stroke:0.3px #237893;transform:scaleY(1.15);transform-origin:0 26px">16</div>
<div class="t" style="left:873.2px;top:814px;font-size:24px;line-height:36px;letter-spacing:0.04px;-webkit-text-stroke:0.3px currentColor"><span style="color:#000000;-webkit-text-stroke:0.3px #000000">    </span><span style="color:#319331;-webkit-text-stroke:0.3px #319331">}</span><span style="color:#000000;-webkit-text-stroke:0.3px #000000">,</span></div>
<div class="t" style="left:742px;top:850px;width:80px;text-align:right;font-size:24.5px;line-height:36px;color:#237893;-webkit-text-stroke:0.3px #237893;transform:scaleY(1.15);transform-origin:0 26px">17</div>
<div class="t" style="left:873.2px;top:850px;font-size:24px;line-height:36px;letter-spacing:0.04px;-webkit-text-stroke:0.3px currentColor"></div>
<div class="t" style="left:742px;top:886px;width:80px;text-align:right;font-size:24.5px;line-height:36px;color:#237893;-webkit-text-stroke:0.3px #237893;transform:scaleY(1.15);transform-origin:0 26px">18</div>
<div class="t" style="left:873.2px;top:886px;font-size:24px;line-height:36px;letter-spacing:0.04px;-webkit-text-stroke:0.3px currentColor"><span style="color:#008000;-webkit-text-stroke:0.3px #008000">    // Install features. Type &#x27;feature&#x27; in the VS Code command palette for a full list.</span></div>
<div class="t" style="left:742px;top:922px;width:80px;text-align:right;font-size:24.5px;line-height:36px;color:#237893;-webkit-text-stroke:0.3px #237893;transform:scaleY(1.15);transform-origin:0 26px">19</div>
<div class="t" style="left:873.2px;top:922px;font-size:24px;line-height:36px;letter-spacing:0.04px;-webkit-text-stroke:0.3px currentColor"><span style="color:#000000;-webkit-text-stroke:0.3px #000000">    </span><span style="color:#0451a5;-webkit-text-stroke:0.3px #0451a5">&quot;features&quot;</span><span style="color:#000000;-webkit-text-stroke:0.3px #000000">: </span><span style="color:#319331;-webkit-text-stroke:0.3px #319331">{</span></div>
<div class="t" style="left:742px;top:958px;width:80px;text-align:right;font-size:24.5px;line-height:36px;color:#237893;-webkit-text-stroke:0.3px #237893;transform:scaleY(1.15);transform-origin:0 26px">20</div>
<div class="t" style="left:873.2px;top:958px;font-size:24px;line-height:36px;letter-spacing:0.04px;-webkit-text-stroke:0.3px currentColor"><span style="color:#000000;-webkit-text-stroke:0.3px #000000">        </span><span style="color:#0451a5;-webkit-text-stroke:0.3px #0451a5">&quot;git-lfs&quot;</span><span style="color:#000000;-webkit-text-stroke:0.3px #000000">: </span><span style="color:#a31515;-webkit-text-stroke:0.3px #a31515">&quot;latest&quot;</span><span style="color:#000000;-webkit-text-stroke:0.3px #000000">,</span></div>
<div class="t" style="left:742px;top:994px;width:80px;text-align:right;font-size:24.5px;line-height:36px;color:#237893;-webkit-text-stroke:0.3px #237893;transform:scaleY(1.15);transform-origin:0 26px">21</div>
<div class="t" style="left:873.2px;top:994px;font-size:24px;line-height:36px;letter-spacing:0.04px;-webkit-text-stroke:0.3px currentColor"><span style="color:#000000;-webkit-text-stroke:0.3px #000000">        </span><span style="color:#0451a5;-webkit-text-stroke:0.3px #0451a5">&quot;sshd&quot;</span><span style="color:#000000;-webkit-text-stroke:0.3px #000000">: </span><span style="color:#a31515;-webkit-text-stroke:0.3px #a31515">&quot;latest&quot;</span></div>
<div class="t" style="left:742px;top:1030px;width:80px;text-align:right;font-size:24.5px;line-height:36px;color:#237893;-webkit-text-stroke:0.3px #237893;transform:scaleY(1.15);transform-origin:0 26px">22</div>
<div class="t" style="left:873.2px;top:1030px;font-size:24px;line-height:36px;letter-spacing:0.04px;-webkit-text-stroke:0.3px currentColor"><span style="color:#000000;-webkit-text-stroke:0.3px #000000">     </span><span style="color:#319331;-webkit-text-stroke:0.3px #319331">}</span><span style="color:#000000;-webkit-text-stroke:0.3px #000000">,</span></div>
<div class="t" style="left:742px;top:1066px;width:80px;text-align:right;font-size:24.5px;line-height:36px;color:#237893;-webkit-text-stroke:0.3px #237893;transform:scaleY(1.15);transform-origin:0 26px">23</div>
<div class="t" style="left:873.2px;top:1066px;font-size:24px;line-height:36px;letter-spacing:0.04px;-webkit-text-stroke:0.3px currentColor"></div>
<div class="t" style="left:742px;top:1102px;width:80px;text-align:right;font-size:24.5px;line-height:36px;color:#237893;-webkit-text-stroke:0.3px #237893;transform:scaleY(1.15);transform-origin:0 26px">24</div>
<div class="t" style="left:873.2px;top:1102px;font-size:24px;line-height:36px;letter-spacing:0.04px;-webkit-text-stroke:0.3px currentColor"><span style="color:#008000;-webkit-text-stroke:0.3px #008000">    // Visual Studio Code extensions which help authoring for docs.github.com.</span></div>
<div class="t" style="left:742px;top:1138px;width:80px;text-align:right;font-size:24.5px;line-height:36px;color:#237893;-webkit-text-stroke:0.3px #237893;transform:scaleY(1.15);transform-origin:0 26px">25</div>
<div class="t" style="left:873.2px;top:1138px;font-size:24px;line-height:36px;letter-spacing:0.04px;-webkit-text-stroke:0.3px currentColor"><span style="color:#000000;-webkit-text-stroke:0.3px #000000">    </span><span style="color:#0451a5;-webkit-text-stroke:0.3px #0451a5">&quot;extensions&quot;</span><span style="color:#000000;-webkit-text-stroke:0.3px #000000">: </span><span style="color:#319331;-webkit-text-stroke:0.3px #319331">[</span></div>
</div>
<svg width="0" height="0" style="position:absolute"><defs><pattern id="sq" width="12" height="6" patternUnits="userSpaceOnUse"><path d="M0 5 L6 1 L12 5" stroke="#bf8803" stroke-width="1.8" fill="none"/></pattern></defs></svg>
  <svg class="a" style="left:932.5px;top:733px" width="187.7" height="7"><rect width="100%" height="7" fill="url(#sq)"/></svg>
  <svg class="a" style="left:874.7px;top:769px" width="794.2" height="7"><rect width="100%" height="7" fill="url(#sq)"/></svg>
  <svg class="a" style="left:874.7px;top:805px" width="462.1" height="7"><rect width="100%" height="7" fill="url(#sq)"/></svg>
  <svg class="a" style="left:874.7px;top:841px" width="72.2" height="7"><rect width="100%" height="7" fill="url(#sq)"/></svg>
  <div class="a" style="left:874px;top:1133px;width:1231px;height:23px;background:rgba(100,100,100,0.4)"></div>
  <div class="a" style="left:2226px;top:228px;width:2px;height:928px;background:linear-gradient(90deg,#e8e8e8,#fff)"></div>
  <div class="a" style="left:2430px;top:272px;width:28px;height:884px;border-left:1px solid #e5e5e5"></div>
  <div class="a" style="left:2430px;top:272px;width:28px;height:305px;background:#c1c1c1;border-left:2px solid #a9a9a9"></div>
  <div class="a" style="left:2449px;top:422px;width:9px;height:50px;background:#9e7a2d"></div>
  <div class="a" style="left:2449px;top:572px;width:9px;height:5px;background:#9e7a2d"></div>
  <div class="a" style="left:2449px;top:577px;width:9px;height:95px;background:#bf8803"></div>
  <!-- minimap -->
<div class="a mono" style="left:2234px;top:272px;width:196px;height:200px;overflow:hidden">
<div class="t" style="left:0;top:-0.5px;font-size:3.45px;line-height:4px;font-weight:bold"><span style="color:#008000">// For format details, see </span><span style="color:#008000">https://aka.ms/devcontainer.json</span><span style="color:#008000">. For config options, see the README at:</span></div>
<div class="t" style="left:0;top:3.5px;font-size:3.45px;line-height:4px;font-weight:bold"><span style="color:#008000">// </span><span style="color:#008000">https://github.com/microsoft/vscode-dev-containers/tree/v0.177.0/containers/javascript-node</span></div>
<div class="t" style="left:0;top:7.5px;font-size:3.45px;line-height:4px;font-weight:bold"><span style="color:#008000">// -</span></div>
<div class="t" style="left:0;top:11.5px;font-size:3.45px;line-height:4px;font-weight:bold"><span style="color:#0431fa">{</span></div>
<div class="t" style="left:0;top:15.5px;font-size:3.45px;line-height:4px;font-weight:bold"><span style="color:#000000">    </span><span style="color:#0451a5">&quot;name&quot;</span><span style="color:#000000">: </span><span style="color:#a31515">&quot;docs.github.com&quot;</span><span style="color:#000000">,</span></div>
<div class="t" style="left:0;top:19.5px;font-size:3.45px;line-height:4px;font-weight:bold"><span style="color:#000000">    </span><span style="color:#0451a5">&quot;build&quot;</span><span style="color:#000000">: </span><span style="color:#319331">{</span></div>
<div class="t" style="left:0;top:23.5px;font-size:3.45px;line-height:4px;font-weight:bold"><span style="color:#000000">        </span><span style="color:#0451a5">&quot;dockerfile&quot;</span><span style="color:#000000">: </span><span style="color:#a31515">&quot;Dockerfile&quot;</span><span style="color:#000000">,</span></div>
<div class="t" style="left:0;top:27.5px;font-size:3.45px;line-height:4px;font-weight:bold"><span style="color:#008000">        // Update &#x27;VARIANT&#x27; to pick a Node version: 12, 14, 16</span></div>
<div class="t" style="left:0;top:31.5px;font-size:3.45px;line-height:4px;font-weight:bold"><span style="color:#000000">        </span><span style="color:#0451a5">&quot;args&quot;</span><span style="color:#000000">: </span><span style="color:#7b3814">{</span><span style="color:#000000"> </span><span style="color:#0451a5">&quot;VARIANT&quot;</span><span style="color:#000000">: </span><span style="color:#a31515">&quot;16&quot;</span><span style="color:#000000"> </span><span style="color:#7b3814">}</span></div>
<div class="t" style="left:0;top:35.5px;font-size:3.45px;line-height:4px;font-weight:bold"><span style="color:#000000">    </span><span style="color:#319331">}</span><span style="color:#000000">,</span></div>
<div class="t" style="left:0;top:39.5px;font-size:3.45px;line-height:4px;font-weight:bold"></div>
<div class="t" style="left:0;top:43.5px;font-size:3.45px;line-height:4px;font-weight:bold"><span style="color:#008000">    // Set *default* container specific settings.json values on container create.</span></div>
<div class="t" style="left:0;top:47.5px;font-size:3.45px;line-height:4px;font-weight:bold"><span style="color:#000000">    </span><span style="color:#0451a5">&quot;settings&quot;</span><span style="color:#000000">: </span><span style="color:#319331">{</span></div>
<div class="t" style="left:0;top:51.5px;font-size:3.45px;line-height:4px;font-weight:bold"><span style="color:#000000">        </span><span style="color:#0451a5">&quot;terminal.integrated.shell.linux&quot;</span><span style="color:#000000">: </span><span style="color:#a31515">&quot;/bin/bash&quot;</span><span style="color:#000000">,</span></div>
<div class="t" style="left:0;top:55.5px;font-size:3.45px;line-height:4px;font-weight:bold"><span style="color:#000000">        </span><span style="color:#0451a5">&quot;cSpell.language&quot;</span><span style="color:#000000">: </span><span style="color:#a31515">&quot;,en&quot;</span></div>
<div class="t" style="left:0;top:59.5px;font-size:3.45px;line-height:4px;font-weight:bold"><span style="color:#000000">    </span><span style="color:#319331">}</span><span style="color:#000000">,</span></div>
<div class="t" style="left:0;top:63.5px;font-size:3.45px;line-height:4px;font-weight:bold"></div>
<div class="t" style="left:0;top:67.5px;font-size:3.45px;line-height:4px;font-weight:bold"><span style="color:#008000">    // Install features. Type &#x27;feature&#x27; in the VS Code command palette for a full list.</span></div>
<div class="t" style="left:0;top:71.5px;font-size:3.45px;line-height:4px;font-weight:bold"><span style="color:#000000">    </span><span style="color:#0451a5">&quot;features&quot;</span><span style="color:#000000">: </span><span style="color:#319331">{</span></div>
<div class="t" style="left:0;top:75.5px;font-size:3.45px;line-height:4px;font-weight:bold"><span style="color:#000000">        </span><span style="color:#0451a5">&quot;git-lfs&quot;</span><span style="color:#000000">: </span><span style="color:#a31515">&quot;latest&quot;</span><span style="color:#000000">,</span></div>
<div class="t" style="left:0;top:79.5px;font-size:3.45px;line-height:4px;font-weight:bold"><span style="color:#000000">        </span><span style="color:#0451a5">&quot;sshd&quot;</span><span style="color:#000000">: </span><span style="color:#a31515">&quot;latest&quot;</span></div>
<div class="t" style="left:0;top:83.5px;font-size:3.45px;line-height:4px;font-weight:bold"><span style="color:#000000">     </span><span style="color:#319331">}</span><span style="color:#000000">,</span></div>
<div class="t" style="left:0;top:87.5px;font-size:3.45px;line-height:4px;font-weight:bold"></div>
<div class="t" style="left:0;top:91.5px;font-size:3.45px;line-height:4px;font-weight:bold"><span style="color:#008000">    // Visual Studio Code extensions which help authoring for docs.github.com.</span></div>
<div class="t" style="left:0;top:95.5px;font-size:3.45px;line-height:4px;font-weight:bold"><span style="color:#000000">    </span><span style="color:#0451a5">&quot;extensions&quot;</span><span style="color:#000000">: </span><span style="color:#319331">[</span></div>
<div class="t" style="left:0;top:99.5px;font-size:3.45px;line-height:4px;font-weight:bold"></div>
<div class="t" style="left:0;top:103.5px;font-size:3.45px;line-height:4px;font-weight:bold"></div>
<div class="t" style="left:0;top:107.5px;font-size:3.45px;line-height:4px;font-weight:bold"></div>
<div class="t" style="left:0;top:111.5px;font-size:3.45px;line-height:4px;font-weight:bold"></div>
<div class="t" style="left:0;top:115.5px;font-size:3.45px;line-height:4px;font-weight:bold"></div>
<div class="t" style="left:0;top:119.5px;font-size:3.45px;line-height:4px;font-weight:bold"></div>
<div class="t" style="left:0;top:123.5px;font-size:3.45px;line-height:4px;font-weight:bold"></div>
<div class="t" style="left:0;top:127.5px;font-size:3.45px;line-height:4px;font-weight:bold"></div>
<div class="t" style="left:0;top:131.5px;font-size:3.45px;line-height:4px;font-weight:bold"><span style="color:#008000">    // Use &#x27;forwardPorts&#x27; to make a list of ports inside the container available locally.</span></div>
<div class="t" style="left:0;top:135.5px;font-size:3.45px;line-height:4px;font-weight:bold"><span style="color:#000000">    </span><span style="color:#0451a5">&quot;forwardPorts&quot;</span><span style="color:#000000">: </span><span style="color:#319331">[</span><span style="color:#098658">4000</span><span style="color:#319331">]</span><span style="color:#000000">,</span></div>
<div class="t" style="left:0;top:139.5px;font-size:3.45px;line-height:4px;font-weight:bold"></div>
<div class="t" style="left:0;top:143.5px;font-size:3.45px;line-height:4px;font-weight:bold"><span style="color:#008000">    // Use &#x27;postCreateCommand&#x27; to run commands after the container is created.</span></div>
<div class="t" style="left:0;top:147.5px;font-size:3.45px;line-height:4px;font-weight:bold"><span style="color:#000000">    </span><span style="color:#0451a5">&quot;postCreateCommand&quot;</span><span style="color:#000000">: </span><span style="color:#a31515">&quot;git lfs pull &amp;&amp; npm ci&quot;</span><span style="color:#000000">,</span></div>
<div class="t" style="left:0;top:151.5px;font-size:3.45px;line-height:4px;font-weight:bold"></div>
<div class="t" style="left:0;top:155.5px;font-size:3.45px;line-height:4px;font-weight:bold"><span style="color:#008000">    // Comment out connect as root instead. More info: https://aka.ms/vscode-remote/containers/non-root.</span></div>
<div class="t" style="left:0;top:159.5px;font-size:3.45px;line-height:4px;font-weight:bold"><span style="color:#000000">    </span><span style="color:#0451a5">&quot;remoteUser&quot;</span><span style="color:#000000">: </span><span style="color:#a31515">&quot;node&quot;</span></div>
<div class="t" style="left:0;top:163.5px;font-size:3.45px;line-height:4px;font-weight:bold"><span style="color:#000000">,</span></div>
<div class="t" style="left:0;top:167.5px;font-size:3.45px;line-height:4px;font-weight:bold"><span style="color:#000000">    </span><span style="color:#0451a5">&quot;hostRequirements&quot;</span><span style="color:#000000">: </span><span style="color:#319331">{</span></div>
<div class="t" style="left:0;top:171.5px;font-size:3.45px;line-height:4px;font-weight:bold"><span style="color:#000000">        </span><span style="color:#0451a5">&quot;memory&quot;</span><span style="color:#000000">: </span><span style="color:#a31515">&quot;8gb&quot;</span></div>
<div class="t" style="left:0;top:175.5px;font-size:3.45px;line-height:4px;font-weight:bold"><span style="color:#000000">     </span><span style="color:#319331">}</span></div>
<div class="t" style="left:0;top:179.5px;font-size:3.45px;line-height:4px;font-weight:bold"><span style="color:#0431fa">}</span></div>
</div>
<div class="a" style="left:2234px;top:320px;width:196px;height:4px;background:#bf8803"></div>
<div class="a" style="left:2234px;top:324px;width:110px;height:4px;background:#bf8803"></div>
<div class="a" style="left:2344px;top:324px;width:86px;height:4px;background:#e0c27c"></div>
<div class="a" style="left:2234px;top:328px;width:64px;height:4px;background:#bf8803"></div>
<div class="a" style="left:2234px;top:332px;width:10px;height:4px;background:#bf8803"></div>
<div class="a" style="left:2234px;top:368px;width:196px;height:4px;background:#bf8803"></div>
<div class="a" style="left:2234px;top:372px;width:66px;height:4px;background:#bf8803"></div>
<div class="a" style="left:2234px;top:376px;width:64px;height:4px;background:#bf8803"></div>
<div class="a" style="left:2234px;top:380px;width:82px;height:4px;background:#bf8803"></div>
<div class="a" style="left:2234px;top:384px;width:98px;height:4px;background:#bf8803"></div>
<div class="a" style="left:2234px;top:388px;width:96px;height:4px;background:#bf8803"></div>
<div class="a" style="left:2234px;top:392px;width:82px;height:4px;background:#bf8803"></div>
<div class="a" style="left:2234px;top:396px;width:10px;height:4px;background:#bf8803"></div>

  <!-- panel -->
  <div class="a" style="left:742px;top:1156px;width:1716px;height:362px;background:#fff"></div>
  <div class="a" style="left:742px;top:1156px;width:1716px;height:2px;background:#e5e5e5"></div>
<div class="t" style="left:783px;top:1178.5px;font-size:22.5px;line-height:30px;color:#6f6f6f;letter-spacing:-0.55px">PROBLEMS</div>
<div class="a" style="left:922px;top:1175px;width:40px;height:36px;border-radius:18px;background:#c4c4c4;color:#333;font-size:21px;line-height:36px;text-align:center;letter-spacing:-0.5px">11</div>
<div class="t" style="left:1007px;top:1178.5px;font-size:22.5px;line-height:30px;color:#6f6f6f;letter-spacing:-0.3px">OUTPUT</div>
<div class="t" style="left:1147px;top:1178.5px;font-size:22.5px;line-height:30px;color:#6f6f6f;letter-spacing:-0.5px">DEBUG CONSOLE</div>
<div class="t" style="left:1385px;top:1178.5px;font-size:22.5px;line-height:30px;color:#424242;letter-spacing:-0.2px">TERMINAL</div>
<div class="a" style="left:1380px;top:1217px;width:119px;height:2px;background:#424242"></div>
<div class="t" style="left:1543px;top:1178.5px;font-size:22.5px;line-height:30px;color:#6f6f6f;letter-spacing:-0.3px">PORTS</div>
<div class="a" style="left:1637px;top:1175px;width:36px;height:36px;border-radius:18px;background:#c4c4c4;color:#333;font-size:21px;line-height:36px;text-align:center">1</div>
<div class="t" style="left:1718px;top:1178.5px;font-size:22.5px;line-height:30px;color:#6f6f6f;letter-spacing:0px">COMMENTS</div>
<svg class="a" style="left:2000px;top:1178px" width="30" height="30" viewBox="0 0 30 30" fill="none" stroke="#424242" stroke-width="2.2"><rect x="1.5" y="1.5" width="27" height="27" rx="2.5"/><path d="M10 8 L16 14.5 L10 21"/></svg>
<div class="t" style="left:2039px;top:1177px;font-size:24px;line-height:34px;color:#616161;letter-spacing:0.6px">bash</div>
<svg class="a" style="left:2110px;top:1178px" width="30" height="30" viewBox="0 0 30 30" fill="none" stroke="#424242" stroke-width="2.2"><path d="M15 2 V28 M2 15 H28"/></svg>
<svg class="a" style="left:2148px;top:1186px" width="20" height="14" viewBox="0 0 20 14" fill="none" stroke="#424242" stroke-width="1.8"><path d="M2 3 L10 11 L18 3"/></svg>
<svg class="a" style="left:2191px;top:1179px" width="28" height="29" viewBox="0 0 28 29" fill="none" stroke="#424242" stroke-width="2.2"><rect x="1.5" y="1.5" width="25" height="26" rx="2.5"/><path d="M14 1.5 V27.5"/></svg>
<svg class="a" style="left:2241px;top:1177px" width="27" height="32" viewBox="0 0 27 32" fill="none" stroke="#424242" stroke-width="2.2"><path d="M2 6 H25 M9 6 V2.5 H18 V6 M5 6 L6.5 29.5 H20.5 L22 6 M10 11 V25 M13.5 11 V25 M17 11 V25"/></svg>
<div class="a" style="left:2294px;top:1190px;width:5px;height:5px;border-radius:50%;background:#424242"></div>
<div class="a" style="left:2305px;top:1190px;width:5px;height:5px;border-radius:50%;background:#424242"></div>
<div class="a" style="left:2316px;top:1190px;width:5px;height:5px;border-radius:50%;background:#424242"></div>
<svg class="a" style="left:2348px;top:1182px" width="24" height="16" viewBox="0 0 24 16" fill="none" stroke="#424242" stroke-width="2.2"><path d="M2 13 L12 3 L22 13"/></svg>
<svg class="a" style="left:2401px;top:1181px" width="22" height="22" viewBox="0 0 22 22" fill="none" stroke="#424242" stroke-width="2.2"><path d="M2 2 L20 20 M20 2 L2 20"/></svg>
<div class="t mono" style="left:783px;top:1235.3px;font-size:23.35px;line-height:28px;color:#333;-webkit-text-stroke:0.25px #333">warning: CRLF will be replaced by LF in data/reusables/actions/runner-debug-description.md.</div>
<div class="t mono" style="left:783px;top:1263.4px;font-size:23.35px;line-height:28px;color:#333;-webkit-text-stroke:0.25px #333">The file will have its original line endings in your working directory</div>
<div class="t mono" style="left:783px;top:1291.5px;font-size:23.35px;line-height:28px;font-weight:bold"><span style="color:#0f7a96">/workspaces/docs</span>  <span style="color:#138a13">(my-feature-branch *)</span></div>
<div class="t mono" style="left:783px;top:1319.6px;font-size:23.35px;line-height:28px;color:#333;-webkit-text-stroke:0.25px #333">$ </div>
<div class="a" style="left:811px;top:1318px;width:14px;height:27px;border:2px solid #333"></div>
<div class="a" style="left:755px;top:1324px;width:17px;height:17px;border-radius:50%;border:2.5px solid #a8a8a8"></div>
<div class="a" style="left:2437px;top:1306px;width:6px;height:24px;background:#8a8a8a"></div>

  <!-- status bar -->
  <div class="a" style="left:46px;top:1518px;width:2412px;height:44px;background:#007acc"></div>
  <div class="a" style="left:46px;top:1518px;width:215px;height:44px;background:#16825d"></div>
  <svg class="a" style="left:68px;top:1525px" width="24" height="30" viewBox="0 0 24 30" fill="none" stroke="#fff" stroke-width="1.7"><path d="M3 10 L10.8 17.8 L3 25.4 M20 3.5 L12.5 10.5 L20 17.8"/></svg>
<div class="t" style="left:100px;top:1523.5px;font-size:23.5px;line-height:34px;color:#fff;letter-spacing:1.15px;-webkit-text-stroke:0.2px #fff">Codespaces</div>
<svg class="a" style="left:276px;top:1524px" width="28" height="32" viewBox="0 0 28 32" fill="none" stroke="#fff" stroke-width="1.8"><circle cx="8.5" cy="6.5" r="3.6"/><circle cx="20.8" cy="12" r="3.6"/><circle cx="8.5" cy="25.5" r="3.6"/><path d="M8.5 10.1 V21.9 M20.8 15.6 C20.8 19 18 19.5 14 19.5 C11 19.5 8.5 20 8.5 22"/></svg>
<div class="t" style="left:310px;top:1523.5px;font-size:23.5px;line-height:34px;color:#fff;letter-spacing:1.55px;-webkit-text-stroke:0.2px #fff">my-feature-branch*</div>
<svg class="a" style="left:569px;top:1529px" width="28" height="24" viewBox="0 0 28 24" fill="none" stroke="#fff" stroke-width="1.8" stroke-linejoin="round"><path d="M8 16.5 H6.5 C3.5 16.5 1.5 14.5 1.5 11.8 C1.5 9 3.7 7 6.3 7 C7 3.8 9.8 1.5 13.5 1.5 C17.5 1.5 20.4 4.3 20.7 7.8 C23.6 7.8 26 10 26 12.5 C26 14.8 24 16.5 21.8 16.5 H19"/><path d="M13.7 22.5 V10.5 M9.3 14.5 L13.7 10 L18 14.5"/></svg>
<svg class="a" style="left:630px;top:1527px" width="26" height="26" viewBox="0 0 26 26" fill="none" stroke="#fff" stroke-width="1.8"><circle cx="13" cy="13" r="11.2"/><path d="M8.5 8.5 L17.5 17.5 M17.5 8.5 L8.5 17.5"/></svg>
<div class="t" style="left:665px;top:1523.5px;font-size:23.5px;line-height:34px;color:#fff;letter-spacing:0px;-webkit-text-stroke:0.2px #fff">0</div>
<svg class="a" style="left:686px;top:1527px" width="27" height="25" viewBox="0 0 27 25" fill="none" stroke="#fff" stroke-width="1.8" stroke-linejoin="round"><path d="M13.5 1.8 L25.5 23 H1.5 Z"/><path d="M13.5 8.5 V16" stroke-width="2.4"/><circle cx="13.5" cy="19.4" r="1.3" fill="#fff" stroke="none"/></svg>
<div class="t" style="left:721px;top:1523.5px;font-size:23.5px;line-height:34px;color:#fff;letter-spacing:0px;-webkit-text-stroke:0.2px #fff">5</div>
<svg class="a" style="left:743px;top:1527px" width="26" height="26" viewBox="0 0 26 26" fill="none" stroke="#fff" stroke-width="1.8"><circle cx="13" cy="13" r="11.2"/><path d="M13 11 V19" stroke-width="2.4"/><circle cx="13" cy="7.4" r="1.4" fill="#fff" stroke="none"/></svg>
<div class="t" style="left:777px;top:1523.5px;font-size:23.5px;line-height:34px;color:#fff;letter-spacing:0px;-webkit-text-stroke:0.2px #fff">6</div>
<svg class="a" style="left:826px;top:1527px" width="26" height="26" viewBox="0 0 26 26" fill="none" stroke="#fff" stroke-width="1.7"><path d="M5 2 C2 6 2 11 5 15 M21 2 C24 6 24 11 21 15 M8.3 5 C6.8 7.2 6.8 9.8 8.3 12 M17.7 5 C19.2 7.2 19.2 9.8 17.7 12"/><circle cx="13" cy="8.5" r="1.8"/><path d="M13 10.5 L7.5 24.5 M13 10.5 L18.5 24.5 M9.5 19.5 H16.5"/></svg>
<div class="t" style="left:860px;top:1523.5px;font-size:23.5px;line-height:34px;color:#fff;letter-spacing:0px;-webkit-text-stroke:0.2px #fff">1</div>
<div class="t" style="left:905px;top:1523.5px;font-size:23.5px;line-height:34px;color:#fff;letter-spacing:0.98px;-webkit-text-stroke:0.2px #fff">/workspaces/docs/.devcontainer/devcontainer.json</div>
<div class="t" style="left:1547px;top:1523.5px;font-size:23.5px;line-height:34px;color:#fff;letter-spacing:1.9px;-webkit-text-stroke:0.2px #fff">UTF-8</div>
<div class="t" style="left:1652px;top:1523.5px;font-size:23.5px;line-height:34px;color:#fff;letter-spacing:0.3px;-webkit-text-stroke:0.2px #fff">LF</div>
<svg class="a" style="left:1711px;top:1529px" width="22" height="22" viewBox="0 0 22 22" fill="none" stroke="#fff" stroke-width="1.9" stroke-linejoin="round"><path d="M7.5 1.4 H6.5 C4.4 1.4 3.4 2.6 3.4 4.8 V8.2 C3.4 9.9 2.6 11 1 11 C2.6 11 3.4 12.1 3.4 13.8 V17.2 C3.4 19.4 4.4 20.6 6.5 20.6 H7.5"/><path d="M14.5 1.4 H15.5 C17.6 1.4 18.6 2.6 18.6 4.8 V8.2 C18.6 9.9 19.4 11 21 11 C19.4 11 18.6 12.1 18.6 13.8 V17.2 C18.6 19.4 17.6 20.6 15.5 20.6 H14.5"/></svg><div class="t" style="left:1747.5px;top:1523.5px;font-size:23.5px;line-height:34px;color:#fff;letter-spacing:0.95px;-webkit-text-stroke:0.2px #fff">JSON with Comments</div>
<div class="t" style="left:2026px;top:1523.5px;font-size:23.5px;line-height:34px;color:#fff;letter-spacing:0.87px;-webkit-text-stroke:0.2px #fff">Layout: U.S.</div>
<svg class="a" style="left:2196px;top:1527px" width="27" height="25" viewBox="0 0 27 25" fill="none" stroke="#fff" stroke-width="1.8" stroke-linejoin="round"><path d="M13.5 1.8 L25.5 23 H1.5 Z"/><path d="M13.5 8.5 V16" stroke-width="2.4"/><circle cx="13.5" cy="19.4" r="1.3" fill="#fff" stroke="none"/></svg>
<div class="t" style="left:2229px;top:1523.5px;font-size:23.5px;line-height:34px;color:#fff;letter-spacing:0.93px;-webkit-text-stroke:0.2px #fff">6 Spell</div>
<svg class="a" style="left:2340px;top:1527px" width="28" height="26" viewBox="0 0 28 26" fill="none" stroke="#fff" stroke-width="1.7" stroke-linejoin="round"><circle cx="9" cy="10" r="4.3"/><path d="M2 24.5 C2 19.5 5 16.5 9 16.5 C13 16.5 16 19.5 16 24.5"/><path d="M11 2 H26 V13 H20 L16.5 16.5 V13"/><path d="M17 7.5 L19 9.5 L22.5 5.5"/></svg>
<svg class="a" style="left:2402px;top:1527px" width="26" height="26" viewBox="0 0 26 26" fill="none" stroke="#fff" stroke-width="1.8" stroke-linejoin="round"><path d="M4 20 H22 L19.8 16.5 V10.5 C19.8 6 16.8 2.5 13 2.5 C9.2 2.5 6.2 6 6.2 10.5 V16.5 Z"/><path d="M10 22 C10 24 11.3 25 13 25 C14.7 25 16 24 16 22"/></svg>
</div>
<!-- annotations -->
<div class="a" style="left:396.9px;top:508.7px;width:134px;height:134px;border-radius:50%;background:#bb4a00;box-shadow:2px 5px 7px rgba(0,0,0,0.6);color:#fff;font-size:89px;line-height:136px;text-align:center"><svg style="position:absolute;left:0;top:0" width="134" height="134"><path d="M65.2 98.4 V55.9 H50.8 V49.0 C58.1 48.5 65.1 46.3 67.4 37.6 H74.1 V98.4 Z" fill="#fff"/></svg></div>
<div class="a" style="left:7.9px;top:922.9px;width:134px;height:134px;border-radius:50%;background:#bb4a00;box-shadow:2px 5px 7px rgba(0,0,0,0.6);color:#fff;font-size:89px;line-height:136px;text-align:center">2</div>
<div class="a" style="left:1505.0px;top:567.0px;width:134px;height:134px;border-radius:50%;background:#bb4a00;box-shadow:2px 5px 7px rgba(0,0,0,0.6);color:#fff;font-size:89px;line-height:136px;text-align:center">3</div>
<div class="a" style="left:1505.0px;top:1280.8px;width:134px;height:134px;border-radius:50%;background:#bb4a00;box-shadow:2px 5px 7px rgba(0,0,0,0.6);color:#fff;font-size:89px;line-height:136px;text-align:center">4</div>
<div class="a" style="left:1236.8px;top:1476.0px;width:134px;height:134px;border-radius:50%;background:#bb4a00;box-shadow:2px 5px 7px rgba(0,0,0,0.6);color:#fff;font-size:89px;line-height:136px;text-align:center">5</div>
</body></html>
